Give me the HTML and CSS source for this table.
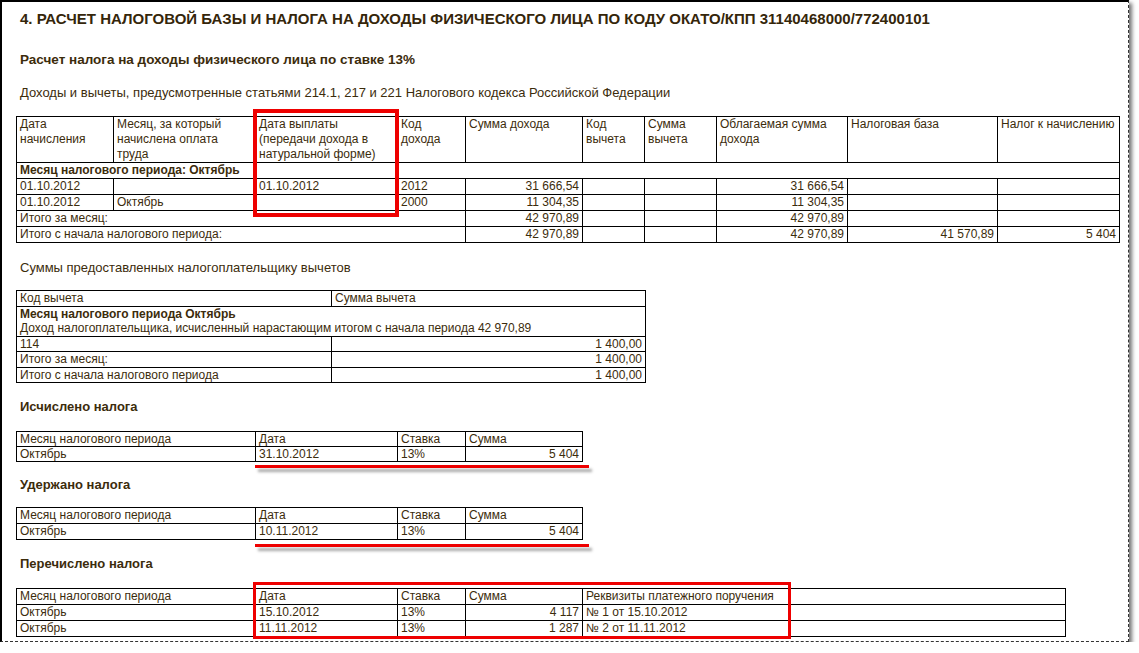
FILE: index.html
```html
<!DOCTYPE html>
<html lang="ru">
<head>
<meta charset="utf-8">
<title>Расчет налоговой базы</title>
<link rel="stylesheet" href="styles.css">
</head>
<body>
<div class="page">
  <h1 class="title">4. РАСЧЕТ НАЛОГОВОЙ БАЗЫ И НАЛОГА НА ДОХОДЫ ФИЗИЧЕСКОГО ЛИЦА ПО КОДУ ОКАТО/КПП 31140468000/772400101</h1>
  <h2 class="subtitle">Расчет налога на доходы физического лица по ставке 13%</h2>
  <p class="note note-a">Доходы и вычеты, предусмотренные статьями 214.1, 217 и 221 Налогового кодекса Российской Федерации</p>

  <table class="grid t-main">
    <colgroup>
      <col class="w97"><col class="w142"><col class="w142"><col class="w68"><col class="w117"><col class="w62"><col class="w72"><col class="w131"><col class="w150"><col class="w122">
    </colgroup>
    <tr class="head3">
      <td>Дата начисления</td>
      <td>Месяц, за который начислена оплата труда</td>
      <td>Дата выплаты (передачи дохода в натуральной форме)</td>
      <td>Код дохода</td>
      <td>Сумма дохода</td>
      <td>Код вычета</td>
      <td>Сумма вычета</td>
      <td>Облагаемая сумма дохода</td>
      <td>Налоговая база</td>
      <td>Налог к начислению</td>
    </tr>
    <tr><td colspan="10" class="b">Месяц налогового периода: Октябрь</td></tr>
    <tr><td>01.10.2012</td><td></td><td>01.10.2012</td><td>2012</td><td class="r">31 666,54</td><td></td><td></td><td class="r">31 666,54</td><td></td><td></td></tr>
    <tr><td>01.10.2012</td><td>Октябрь</td><td></td><td>2000</td><td class="r">11 304,35</td><td></td><td></td><td class="r">11 304,35</td><td></td><td></td></tr>
    <tr><td colspan="4">Итого за месяц:</td><td class="r">42 970,89</td><td></td><td></td><td class="r">42 970,89</td><td></td><td></td></tr>
    <tr><td colspan="4">Итого с начала налогового периода:</td><td class="r">42 970,89</td><td></td><td></td><td class="r">42 970,89</td><td class="r">41 570,89</td><td class="r">5 404</td></tr>
  </table>

  <p class="note note-b">Суммы предоставленных налогоплательщику вычетов</p>

  <table class="grid t-ded">
    <colgroup><col class="w315"><col class="w314"></colgroup>
    <tr><td>Код вычета</td><td>Сумма вычета</td></tr>
    <tr class="nobottom"><td colspan="2" class="b">Месяц налогового периода Октябрь</td></tr>
    <tr class="notop"><td colspan="2">Доход налогоплательщика, исчисленный нарастающим итогом с начала периода 42 970,89</td></tr>
    <tr><td>114</td><td class="r">1 400,00</td></tr>
    <tr><td>Итого за месяц:</td><td class="r">1 400,00</td></tr>
    <tr><td>Итого с начала налогового периода</td><td class="r">1 400,00</td></tr>
  </table>

  <h3 class="sect sect-a">Исчислено налога</h3>
  <table class="grid t-small t-calc">
    <colgroup><col class="w239"><col class="w142"><col class="w68"><col class="w117"></colgroup>
    <tr><td>Месяц налогового периода</td><td>Дата</td><td>Ставка</td><td>Сумма</td></tr>
    <tr><td>Октябрь</td><td>31.10.2012</td><td>13%</td><td class="r">5 404</td></tr>
  </table>

  <h3 class="sect sect-b">Удержано налога</h3>
  <table class="grid t-small t-held">
    <colgroup><col class="w239"><col class="w142"><col class="w68"><col class="w117"></colgroup>
    <tr><td>Месяц налогового периода</td><td>Дата</td><td>Ставка</td><td>Сумма</td></tr>
    <tr><td>Октябрь</td><td>10.11.2012</td><td>13%</td><td class="r">5 404</td></tr>
  </table>

  <h3 class="sect sect-c">Перечислено налога</h3>
  <table class="grid t-paid">
    <colgroup><col class="w239"><col class="w142"><col class="w68"><col class="w117"><col class="w483"></colgroup>
    <tr><td>Месяц налогового периода</td><td>Дата</td><td>Ставка</td><td>Сумма</td><td>Реквизиты платежного поручения</td></tr>
    <tr><td>Октябрь</td><td>15.10.2012</td><td>13%</td><td class="r">4 117</td><td>№ 1 от 15.10.2012</td></tr>
    <tr><td>Октябрь</td><td>11.11.2012</td><td>13%</td><td class="r">1 287</td><td>№ 2 от 11.11.2012</td></tr>
  </table>

  <div class="mark mark-box mark-1"></div>
  <div class="mark mark-line mark-2"></div>
  <div class="mark mark-line mark-3"></div>
  <div class="mark mark-box mark-4"></div>
</div>
</body>
</html>
```

FILE: styles.css
```css
html, body {
  margin: 0;
  padding: 0;
  background: #fff;
}

body {
  font-family: "Liberation Sans", Arial, sans-serif;
  color: #3c2c0c;
}

.page {
  position: relative;
  box-sizing: border-box;
  width: 1129px;
  height: 642px;
  border-top: 2px solid #000;
  border-left: 2px solid #000;
  border-right: 1px dashed #333;
  border-bottom: 1px dashed #333;
  box-shadow: 3px 3px 4px rgba(0, 0, 0, 0.55);
  padding: 0 0 0 14px;
  overflow: hidden;
  display: flex;
  flex-direction: column;
  align-items: flex-start;
}

.title {
  margin: 8px 0 0;
  padding-left: 4px;
  font-size: 15px;
  line-height: 17px;
  font-weight: bold;
  color: #35260a;
  white-space: nowrap;
}

.subtitle {
  margin: 25px 0 0;
  padding-left: 4px;
  font-size: 13.5px;
  line-height: 16px;
  font-weight: bold;
}

.note {
  margin: 0;
  padding-left: 4px;
  font-size: 13px;
  line-height: 16px;
}

.note-a { margin-top: 17px; }
.note-b { margin-top: 17px; }

.sect {
  margin: 0;
  padding-left: 4px;
  font-size: 13px;
  line-height: 16px;
  font-weight: bold;
}

.sect-a { margin-top: 16px; }
.sect-b { margin-top: 15px; }
.sect-c { margin-top: 16px; }

.grid {
  border-collapse: collapse;
  table-layout: fixed;
  font-size: 12px;
  line-height: 15px;
  flex: none;
}

.grid td {
  border: 1px solid #000;
  padding: 0 3px;
  vertical-align: top;
  white-space: nowrap;
  overflow: hidden;
}

.grid .head3 td {
  height: 45px;
  white-space: normal;
}

.grid td.r { text-align: right; }
.grid td.b { font-weight: bold; }

.t-main { width: 1103px; margin-top: 15px; }
.t-ded { width: 629px; margin-top: 14px; line-height: 14.5px; }
.t-calc { width: 566px; margin-top: 16px; line-height: 14px; }
.t-held { width: 566px; margin-top: 14px; }
.t-paid { width: 1049px; margin-top: 16px; }

.t-ded .nobottom td { border-bottom: none; }
.t-ded .notop td { border-top: none; }

.w62 { width: 62px; }
.w68 { width: 68px; }
.w72 { width: 72px; }
.w97 { width: 97px; }
.w117 { width: 117px; }
.w122 { width: 122px; }
.w131 { width: 131px; }
.w142 { width: 142px; }
.w150 { width: 150px; }
.w239 { width: 239px; }
.w314 { width: 314px; }
.w315 { width: 315px; }
.w483 { width: 483px; }

/* red annotation overlays */
.mark {
  position: absolute;
  box-sizing: border-box;
  pointer-events: none;
}

.mark-box {
  border: 4px solid #ee0000;
}

.mark-line {
  height: 3px;
  background: #ee0000;
  box-shadow: 3px 4px 3px rgba(0, 0, 0, 0.35);
}

.mark-1 { left: 251px; top: 107px; width: 146px; height: 108px; }
.mark-2 { left: 253px; top: 463px; width: 334px; }
.mark-3 { left: 253px; top: 542px; width: 334px; }
.mark-4 { left: 251px; top: 580px; width: 538px; height: 57px; border-width: 3px; }
```
